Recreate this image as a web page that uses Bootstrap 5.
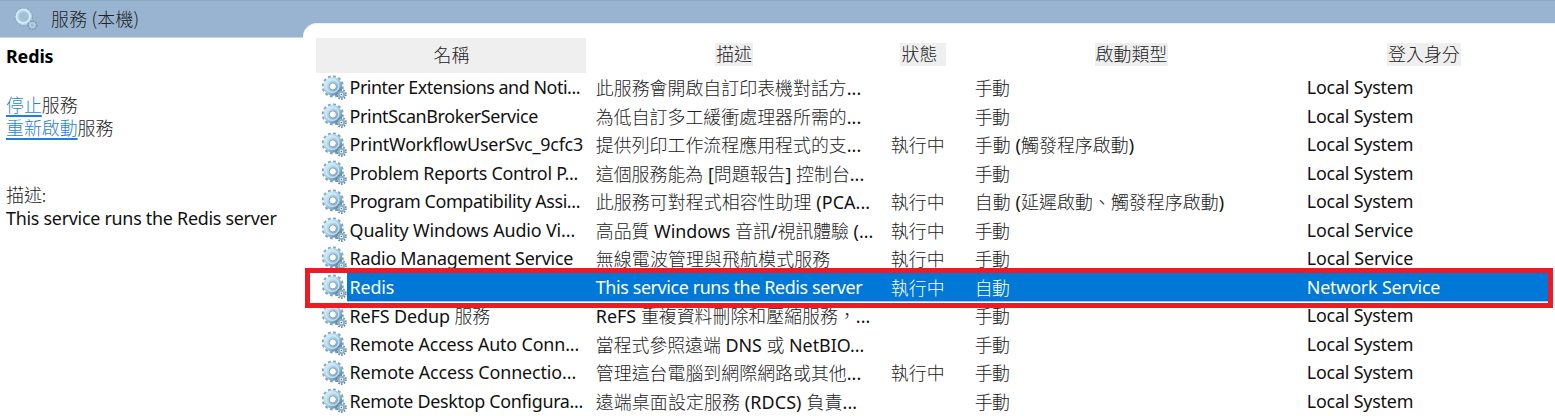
<!DOCTYPE html>
<html lang="zh-Hant">
<head>
<meta charset="utf-8">
<title>服務</title>
<link href="https://cdn.jsdelivr.net/npm/bootstrap@5.3.0/dist/css/bootstrap.min.css" rel="stylesheet">
<style>
body{font-family:"Noto Sans","Noto Sans CJK TC",sans-serif;font-size:17.9px;line-height:22px;color:#111;background:#fff;width:1555px;height:416px;overflow:hidden}
.zh{font-family:"Noto Sans CJK TC",sans-serif;font-weight:300;color:#222}
.topbar{height:38px;background:#99b4d1;border-top:1px solid #8fabc4;border-bottom:1px solid #c6d6e8;padding:0 0 2px 13px;flex:none}
.side{width:303px;padding:7px 0 0 6px;flex:none}
.side .zh a{color:#1f7fdc;text-underline-offset:3px;text-decoration-thickness:1.5px}
.stack{line-height:23px}
.panel{margin-top:-15px;background:#fff;border-top-left-radius:14px;border-top:1px solid #e9f0f7;padding:14px 0 0 13.4px;height:393px}
.svc-row{display:grid;grid-template-columns:270px 295px 84px 332px 253px}
.svc-head{height:35.5px}
.svc-head>div{display:flex;justify-content:center;align-items:flex-start;padding-top:5px}
.svc-head>.first{background:#efefef;height:35px;line-height:23px}
.tag{background:#efefef;padding:0 1px;height:23px;line-height:23px}
.tag.wide{padding-right:9px}
.tag>span{position:relative;top:-1px}
.svc-item{height:28.5px;align-content:center;align-items:center;white-space:nowrap;line-height:26px}
.svc-item>div{padding:0 0 1.5px 9.4px;height:27.5px}
.svc-item>div:first-child{padding-left:5.6px;display:flex;align-items:center}
.svc-item .gear{transform:translateY(.2px)}
.gear{width:25px;height:25px;flex:none;margin-right:2.6px}
.topbar .gear{margin-right:13px}
.chosen{background:linear-gradient(#0078d7,#0078d7) 31px 0/1201px 28px no-repeat,linear-gradient(#9dcbf0,#9dcbf0) 31px 28px/1201px 1px no-repeat}
.chosen,.chosen .zh{color:#fff}
.fit{display:inline-block;white-space:nowrap}
.frame{position:absolute;left:305px;top:268px;width:1248px;height:40px;border:5px solid #ed1c24}
</style>
</head>
<body class="position-relative d-flex flex-column">
<svg width="0" height="0" class="position-absolute">
<defs>
<linearGradient id="steel" x1="0" y1="0" x2="1" y2="1"><stop offset="0" stop-color="#cfe9f5"/><stop offset=".55" stop-color="#9fc8e0"/><stop offset="1" stop-color="#5b88ac"/></linearGradient>
<symbol id="gear" viewBox="0 0 25 25">
<circle cx="10.8" cy="11.2" r="9.7" fill="none" stroke="#7fa5c0" stroke-width="2.7" stroke-dasharray="2.7 2.38"/>
<circle cx="10.8" cy="11.2" r="6.3" fill="none" stroke="url(#steel)" stroke-width="6"/>
<circle cx="10.4" cy="10.7" r="6.5" fill="none" stroke="#d2edf8" stroke-width="1.6" opacity=".75"/>
<circle cx="10.8" cy="11.2" r="3.6" fill="#fff" stroke="#7c9fba" stroke-width="1"/>
<circle cx="19.4" cy="19.3" r="4.5" fill="none" stroke="#64889f" stroke-width="1.8" stroke-dasharray="1.5 1.33"/>
<circle cx="19.4" cy="19.3" r="2.7" fill="#e6f2f8" stroke="#90b2c8" stroke-width="2.1"/>
<circle cx="19.4" cy="19.3" r=".8" fill="#587e9c"/>
</symbol>
<symbol id="cog" viewBox="0 0 25 25">
<circle cx="10.7" cy="10.8" r="8.7" fill="none" stroke="#86a9c5" stroke-width="1.4" stroke-dasharray="2 2"/>
<circle cx="10.7" cy="10.8" r="6.6" fill="#a6bdd6" stroke="#b4d9ed" stroke-width="3.4"/>
<circle cx="10.2" cy="10.3" r="6.8" fill="none" stroke="#e0f2fa" stroke-width="1.1"/>
<circle cx="19.4" cy="19.2" r="4.2" fill="none" stroke="#7598b4" stroke-width="1.8" stroke-dasharray="1.5 1.3"/>
<circle cx="19.4" cy="19.2" r="2.4" fill="#a0bcd3" stroke="#b7cfdf" stroke-width="1.5"/>
</symbol>
</defs>
</svg>
<header class="topbar d-flex align-items-center">
<svg class="gear"><use href="#cog"/></svg><span class="zh fit" data-w="88">服務 (本機)</span>
</header>
<main class="d-flex flex-grow-1">
<aside class="side">
<div class="fw-bold text-black"><span class="fit" data-w="47">Redis</span></div>
<div class="zh stack" style="margin-top:26px"><a href="#">停止</a>服務<br><a href="#">重新啟動</a>服務</div>
<div class="zh stack" style="margin-top:44px">描述:</div>
<div class="stack" style="padding-top:1px"><span class="fit" data-w="270">This service runs the Redis server</span></div>
</aside>
<section class="panel flex-grow-1">
<div class="svc-row svc-head zh">
<div class="first">名稱</div>
<div><div class="tag"><span>描述</span></div></div>
<div><div class="tag wide"><span>狀態</span></div></div>
<div><div class="tag"><span>啟動類型</span></div></div>
<div><div class="tag"><span>登入身分</span></div></div>
</div>
<div id="services"></div>
</section>
</main>
<div class="frame"></div>
<script src="https://cdn.jsdelivr.net/npm/bootstrap@5.3.0/dist/js/bootstrap.bundle.min.js"></script>
<script>
// name, name width, description, description width, status, start type, start width, account, account width
const services=[
["Printer Extensions and Noti...",230,"此服務會開啟自訂印表機對話方...",265,"","手動",34,"Local System",106],
["PrintScanBrokerService",188,"為低自訂多工緩衝處理器所需的...",265,"","手動",34,"Local System",106],
["PrintWorkflowUserSvc_9cfc3",233,"提供列印工作流程應用程式的支...",265,"執行中","手動 (觸發程序啟動)",159,"Local System",106],
["Problem Reports Control P...",228,"這個服務能為 [問題報告] 控制台...",268,"","手動",34,"Local System",106],
["Program Compatibility Assi...",230,"此服務可對程式相容性助理 (PCA...",274,"執行中","自動 (延遲啟動、觸發程序啟動)",249,"Local System",106],
["Quality Windows Audio Vi...",225,"高品質 Windows 音訊/視訊體驗 (...",277,"執行中","手動",34,"Local Service",106],
["Radio Management Service",223,"無線電波管理與飛航模式服務",234,"執行中","手動",34,"Local Service",106],
["Redis",44,"This service runs the Redis server",266,"執行中","自動",34,"Network Service",133],
["ReFS Dedup 服務",140,"ReFS 重複資料刪除和壓縮服務，...",274,"","手動",34,"Local System",106],
["Remote Access Auto Conn...",229,"當程式參照遠端 DNS 或 NetBIO...",268,"","手動",34,"Local System",106],
["Remote Access Connectio...",226,"管理這台電腦到網際網路或其他...",265,"執行中","手動",34,"Local System",106],
["Remote Desktop Configura...",233,"遠端桌面設定服務 (RDCS) 負責...",261,"","手動",34,"Local System",106]];
// Chinese runs take the light CJK face, Latin runs the regular one
const runs=t=>t.replace(/[\u3000-\u9fff\uff00-\uffef]+/g,'<span class="zh">$&</span>');
const cell=(t,w)=>`<span class="fit" data-w="${w}">${runs(t)}</span>`;
document.getElementById('services').innerHTML=services.map(s=>`<div class="svc-row svc-item${s[0]==='Redis'?' chosen':''}"><div><svg class="gear"><use href="#gear"/></svg>${cell(s[0],s[1])}</div><div>${cell(s[2],s[3])}</div><div>${s[4]?cell(s[4],53.5):''}</div><div>${cell(s[5],s[6])}</div><div>${cell(s[7],s[8])}</div></div>`).join('');
document.querySelectorAll('.fit').forEach(e=>{
const gap=(+e.dataset.w+.5-e.getBoundingClientRect().width)/e.textContent.length;
e.style.letterSpacing=gap.toFixed(3)+'px';
});
</script>
</body>
</html>
